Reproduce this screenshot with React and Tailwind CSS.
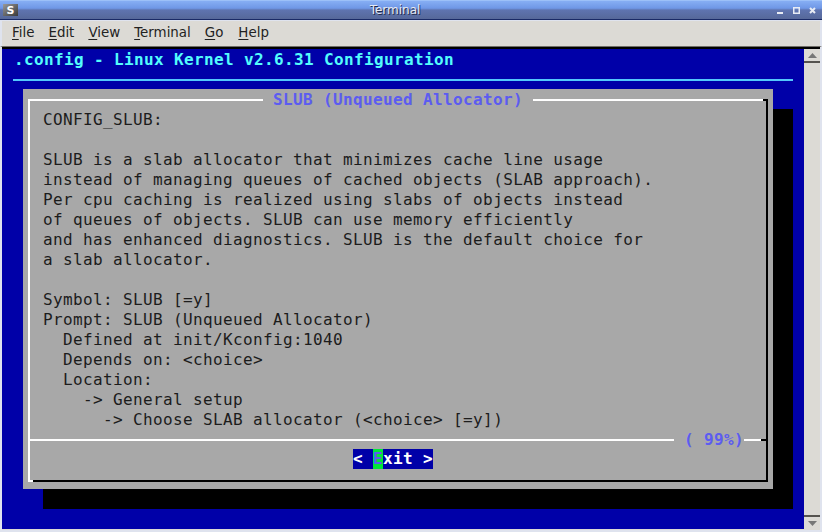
import React from 'react';

const bodyLines = [
    'CONFIG_SLUB:',
    '',
    'SLUB is a slab allocator that minimizes cache line usage',
    'instead of managing queues of cached objects (SLAB approach).',
    'Per cpu caching is realized using slabs of objects instead',
    'of queues of objects. SLUB can use memory efficiently',
    'and has enhanced diagnostics. SLUB is the default choice for',
    'a slab allocator.',
    '',
    'Symbol: SLUB [=y]',
    'Prompt: SLUB (Unqueued Allocator)',
    '  Defined at init/Kconfig:1040',
    '  Depends on: <choice>',
    '  Location:',
    '    -> General setup',
    '      -> Choose SLAB allocator (<choice> [=y])',
];

const menus = [
    { key: 'F', rest: 'ile', cls: 'ml-[10px]' },
    { key: 'E', rest: 'dit', cls: 'ml-[14px]' },
    { key: 'V', rest: 'iew', cls: 'ml-[14px]' },
    { key: 'T', rest: 'erminal', cls: 'ml-[14px]' },
    { key: 'G', rest: 'o', cls: 'ml-[14px]' },
    { key: 'H', rest: 'elp', cls: 'ml-[15px]' },
];

const App = () => {
    return (
        <div className="w-[822px] h-[532px] overflow-hidden flex flex-col bg-[#dcdad5] font-['DejaVu_Sans',sans-serif]">
            {/* title bar */}
            <div className="h-[20px] shrink-0 flex items-center bg-[linear-gradient(to_bottom,#86aef4_0%,#6f97e6_40%,#5f74b0_50%,#566899_100%)] border-t border-[#9cc0f8] border-b border-b-[#1a2a66]">
                <div className="ml-[3px] w-[15px] h-[12px] bg-gradient-to-br from-[#9a9a9a] to-[#3a3a3a] flex items-center justify-center">
                    <span className="text-[11px] leading-none font-bold text-white">S</span>
                </div>
                <div className="flex-1 pr-[5px] text-center text-[12px] leading-none text-[#e6eaf4] [text-shadow:1px_1px_0_#1f2a4a]">Terminal</div>
                <div className="flex items-center gap-[9px] mr-[6px]">
                    <svg width="7" height="7" viewBox="0 0 7 7"><rect x="0" y="5" width="6" height="2" fill="#e8ecf4" /></svg>
                    <svg width="7" height="7" viewBox="0 0 7 7"><rect x="0.75" y="0.75" width="5.5" height="5.5" fill="none" stroke="#e8ecf4" strokeWidth="1.5" /></svg>
                    <svg width="7" height="7" viewBox="0 0 7 7"><path d="M1 1l5 5M6 1l-5 5" stroke="#e8ecf4" strokeWidth="2" /></svg>
                </div>
            </div>

            {/* menu bar */}
            <div className="h-[27px] shrink-0 flex items-center border-t border-l-2 border-r-2 border-b border-[#dfe3ee] border-b-[#6f6d68] text-[13.4px] text-[#222]">
                {menus.map((m) => (
                    <span key={m.key} className={m.cls}>
                        <span className="underline underline-offset-2">{m.key}</span>{m.rest}
                    </span>
                ))}
            </div>

            {/* terminal and scrollbar */}
            <div className="flex-1 flex border-l-2 border-r-2 border-b-2 border-[#dfe3ee] min-h-0">
                <div className="w-[802px] h-[482px] bg-[#0000a8] border-t-2 border-black font-['DejaVu_Sans_Mono',monospace] text-[16px] tracking-[0.37px] leading-[20px]">
                    <div className="h-[20px] pt-[1px] pl-[12px] font-bold text-[#54fcfc] whitespace-pre">.config - Linux Kernel v2.6.31 Configuration</div>
                    <div className="h-[2px] mt-[10px] ml-[11px] w-[780px] bg-[#54c8fc]"></div>
                    <div className="mt-[8px] ml-[21px] w-[750px] h-[400px] bg-[#a8a8a8] shadow-[20px_20px_0_#000] flex flex-col pt-[11px] pl-[5px] pr-[5px]">
                        {/* top edge with title */}
                        <div className="h-0 flex items-center shrink-0">
                            <div className="w-[235px] h-[2px] bg-white"></div>
                            <div className="w-[10px]"></div>
                            <span className="font-bold text-[#5c5cf0] whitespace-pre">SLUB (Unqueued Allocator)</span>
                            <div className="w-[10px]"></div>
                            <div className="flex-1 h-[2px] bg-white"></div>
                            <div className="w-[5px] h-[2px] bg-black"></div>
                        </div>
                        <div className="h-[380px] flex flex-col border-l-2 border-white border-r-2 border-r-black">
                            <div className="h-[340px] pl-[13px] pt-[10px] text-[#1c1c1c] whitespace-pre">
                                {bodyLines.map((line, idx) => (
                                    <div key={idx} className="h-[20px]">{line}</div>
                                ))}
                            </div>
                            {/* separator with percent */}
                            <div className="h-0 flex items-center shrink-0">
                                <div className="w-[644px] h-[2px] bg-white"></div>
                                <div className="w-[10px]"></div>
                                <span className="font-bold text-[#5c5cf0] whitespace-pre">( 99%)</span>
                                <div className="flex-1 h-[2px] bg-white"></div>
                                <div className="w-[5px] h-[2px] bg-black"></div>
                            </div>
                            <div className="flex-1 flex justify-center pt-[9px] pr-[10px]">
                                <div className="h-[20px] flex font-bold text-white bg-[#0000a8] whitespace-pre">
                                    <span>{'< '}</span>
                                    <span className="bg-[#00e838] text-[#5c5cf0]">E</span>
                                    <span>{'xit >'}</span>
                                </div>
                            </div>
                        </div>
                        {/* bottom edge */}
                        <div className="h-[2px] flex shrink-0">
                            <div className="w-[5px] bg-white"></div>
                            <div className="flex-1 bg-black"></div>
                        </div>
                    </div>
                </div>

                {/* scrollbar */}
                <div className="flex-1 bg-[#dcdad5] flex flex-col">
                    <div className="h-[16px] shrink-0 border-b-2 border-[#55534f] border-t-2 border-t-black flex items-center justify-center">
                        <svg width="9" height="5" viewBox="0 0 9 5"><path d="M4.5 0L9 5H0z" fill="#777" /></svg>
                    </div>
                    <div className="flex-1"></div>
                    <div className="h-[15px] shrink-0 border-t-2 border-[#55534f] flex items-center justify-center">
                        <svg width="9" height="5" viewBox="0 0 9 5"><path d="M0 0h9L4.5 5z" fill="#777" /></svg>
                    </div>
                </div>
            </div>
        </div>
    );
};

export default App;
